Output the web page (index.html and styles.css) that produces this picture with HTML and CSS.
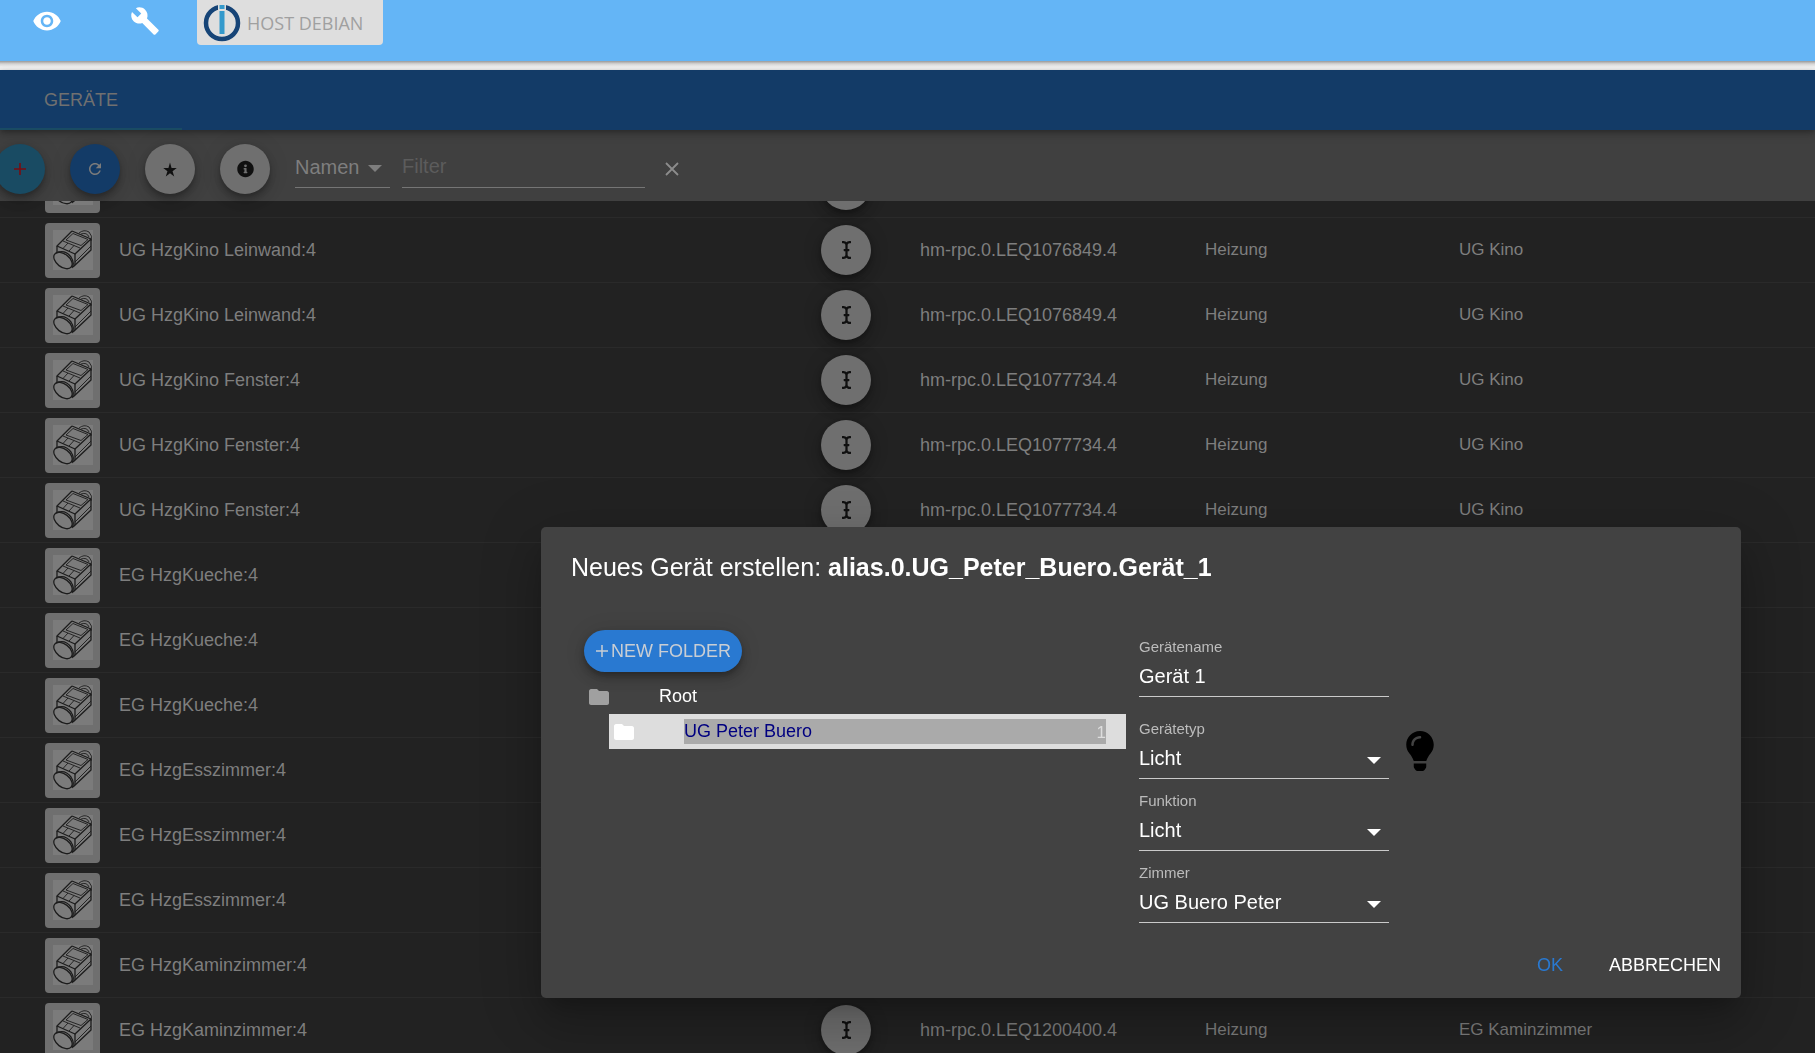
FILE: index.html
```html
<!DOCTYPE html>
<html lang="de">
<head>
<meta charset="utf-8">
<title>Geräte</title>
<link rel="stylesheet" href="styles.css">
</head>
<body>
<svg class="sprite" aria-hidden="true">
  <symbol id="thermostat" viewBox="0 0 40 40">
    <g fill="none" stroke="#1c1c1c" stroke-linejoin="round">
      <g stroke-width="1.300">
        <path d="M19 1 L38 9 V20 L20 37"/>
        <path d="M19 1 L4 16 L22 24 L38 9"/>
        <path d="M22 24 V35 M4 16 V23"/>
        <ellipse cx="10" cy="30.500" rx="10.500" ry="6.500" transform="rotate(38 10 30.500)"/>
        <path d="M3 23 Q12 19 18 27 Q22 33 19 38"/>
      </g>
      <g stroke-width="0.900">
        <path d="M20 3.500 L35 9.500 L28 15.500 L13 10 Z"/>
        <path d="M10 11 L27 18 M10 18.500 L15 13 M16 21 L21 15.500"/>
        <path d="M26 3 Q31 -1 36 2 Q40 6 38 11 M28 4 Q34 2 36 7"/>
        <path d="M22 32 L38 16"/>
      </g>
    </g>
  </symbol>
  <symbol id="cursor" viewBox="0 0 256 512">
    <path d="M256 52.048V12.065C256 5.496 250.726.148 244.158.066 211.621-.344 166.469.011 128 37.959 90.266.736 46.979-.114 11.913.114 5.318.157 0 5.519 0 12.114v39.645c0 6.687 5.458 12.078 12.145 11.998C38.111 63.447 96 67.243 96 112.182V224H60c-6.627 0-12 5.373-12 12v40c0 6.627 5.373 12 12 12h36v112c0 44.932-56.075 48.031-83.95 47.959C5.404 447.942 0 453.306 0 459.952v39.983c0 6.569 5.274 11.917 11.842 11.999 32.537.409 77.689.054 116.158-37.894 37.734 37.223 81.021 38.073 116.087 37.845 6.595-.043 11.913-5.405 11.913-12V460.24c0-6.687-5.458-12.078-12.145-11.998C217.889 448.553 160 444.939 160 400V288h36c6.627 0 12-5.373 12-12v-40c0-6.627-5.373-12-12-12h-36V112.182c0-44.932 56.075-48.213 83.95-48.142 6.646.018 12.05-5.346 12.05-11.992z"/>
  </symbol>
  <symbol id="caret" viewBox="0 0 14 7"><path d="M0 0h14l-7 7z"/></symbol>
  <symbol id="folder" viewBox="0 0 20 16"><path d="M8 0H2C1 0 0 1 0 2v12c0 1 1 2 2 2h16c1 0 2-1 2-2V4c0-1-1-2-2-2h-8z"/></symbol>
</svg>

<header class="appbar">
  <button class="appbar-icon" aria-label="Ansicht"><svg width="30" height="30" viewBox="0 0 24 24"><path d="M12 4.500C7 4.500 2.730 7.610 1 12c1.730 4.390 6 7.500 11 7.500s9.270-3.110 11-7.500c-1.730-4.390-6-7.500-11-7.500zM12 17c-2.760 0-5-2.240-5-5s2.240-5 5-5 5 2.240 5 5-2.240 5-5 5zm0-8c-1.660 0-3 1.340-3 3s1.340 3 3 3 3-1.340 3-3-1.340-3-3-3z"/></svg></button>
  <button class="appbar-icon" aria-label="Einstellungen"><svg width="30" height="30" viewBox="0 0 24 24"><path d="M22.700 19l-9.100-9.100c.9-2.300.4-5-1.500-6.900-2-2-5-2.400-7.400-1.300L9 6 6 9 1.600 4.700C.4 7.100.9 10.100 2.900 12.100c1.900 1.900 4.600 2.400 6.900 1.500l9.100 9.100c.4.4 1 .4 1.400 0l2.300-2.300c.5-.4.5-1.100.1-1.400z"/></svg></button>
  <button class="host">
    <svg width="38" height="38" viewBox="0 0 38 38"><circle cx="19" cy="19" r="16" fill="none" stroke="#164477" stroke-width="4.500"/><path fill="#dedede" d="M15 0h8v9h-8z"/><path fill="#3399cc" d="M16.500 1h5v4h-5zM16.500 7h5v23h-5z"/></svg>
    <span>HOST DEBIAN</span>
  </button>
</header>

<nav class="tabs"><a class="tab" href="#geraete">GERÄTE</a></nav>

<div class="toolbar">
  <button class="fab fab-add" aria-label="Hinzufügen"><svg width="12" height="12" viewBox="0 0 12 12"><path d="M6 0v12M0 6h12" stroke="#7a0c10" stroke-width="1.600"/></svg></button>
  <button class="fab fab-refresh" aria-label="Aktualisieren"><svg width="18" height="18" viewBox="0 0 24 24"><path fill="#7b7b7b" d="M17.650 6.350C16.200 4.900 14.210 4 12 4c-4.420 0-7.990 3.580-7.990 8s3.570 8 7.990 8c3.730 0 6.840-2.550 7.730-6h-2.080c-.82 2.330-3.040 4-5.650 4-3.310 0-6-2.690-6-6s2.690-6 6-6c1.660 0 3.140.69 4.220 1.780L13 11h7V4l-2.350 2.350z"/></svg></button>
  <button class="fab" aria-label="Favoriten"><svg width="18" height="18" viewBox="0 0 24 24"><path fill="#101010" d="M12 17.800l5.600 4.200-2.200-7 5.600-4.200h-6.900L12 3.200 9.900 10.800H3l5.600 4.200-2.200 7z"/></svg></button>
  <button class="fab" aria-label="Info"><svg width="17" height="18" viewBox="0 0 512 512"><path fill="#101010" d="M256 8C119 8 8 119 8 256s111 248 248 248 248-111 248-248S393 8 256 8zm0 110a42 42 0 1 1 0 84 42 42 0 0 1 0-84zm56 254a12 12 0 0 1-12 12h-88a12 12 0 0 1-12-12v-24a12 12 0 0 1 12-12h12v-64h-12a12 12 0 0 1-12-12v-24a12 12 0 0 1 12-12h64a12 12 0 0 1 12 12v100h12a12 12 0 0 1 12 12z"/></svg></button>
  <span class="select select-sort">
    <select aria-label="Sortierung"><option>Namen</option></select>
    <svg class="caret"><use href="#caret"/></svg>
  </span>
  <input class="filter" type="text" placeholder="Filter" aria-label="Filter">
  <button class="clear" aria-label="Filter löschen"><svg width="14" height="14" viewBox="0 0 14 14"><path d="M1 1l12 12M13 1L1 13" stroke="#8c8c8c" stroke-width="1.800"/></svg></button>
</div>

<main class="list">
  <table class="devices">
    <colgroup><col class="c-pic"><col><col class="c-edit"><col class="c-id"><col class="c-fn"><col class="c-room"></colgroup>
    <tbody>
      <tr><td><span class="pic"><svg><use href="#thermostat"/></svg></span></td><td></td><td><button class="fab" aria-label="Bearbeiten"><svg class="cur"><use href="#cursor"/></svg></button></td><td></td><td></td><td></td></tr>
      <tr><td><span class="pic"><svg><use href="#thermostat"/></svg></span></td><td>UG HzgKino Leinwand:4</td><td><button class="fab" aria-label="Bearbeiten"><svg class="cur"><use href="#cursor"/></svg></button></td><td>hm-rpc.0.LEQ1076849.4</td><td class="small">Heizung</td><td class="small">UG Kino</td></tr>
      <tr><td><span class="pic"><svg><use href="#thermostat"/></svg></span></td><td>UG HzgKino Leinwand:4</td><td><button class="fab" aria-label="Bearbeiten"><svg class="cur"><use href="#cursor"/></svg></button></td><td>hm-rpc.0.LEQ1076849.4</td><td class="small">Heizung</td><td class="small">UG Kino</td></tr>
      <tr><td><span class="pic"><svg><use href="#thermostat"/></svg></span></td><td>UG HzgKino Fenster:4</td><td><button class="fab" aria-label="Bearbeiten"><svg class="cur"><use href="#cursor"/></svg></button></td><td>hm-rpc.0.LEQ1077734.4</td><td class="small">Heizung</td><td class="small">UG Kino</td></tr>
      <tr><td><span class="pic"><svg><use href="#thermostat"/></svg></span></td><td>UG HzgKino Fenster:4</td><td><button class="fab" aria-label="Bearbeiten"><svg class="cur"><use href="#cursor"/></svg></button></td><td>hm-rpc.0.LEQ1077734.4</td><td class="small">Heizung</td><td class="small">UG Kino</td></tr>
      <tr><td><span class="pic"><svg><use href="#thermostat"/></svg></span></td><td>UG HzgKino Fenster:4</td><td><button class="fab" aria-label="Bearbeiten"><svg class="cur"><use href="#cursor"/></svg></button></td><td>hm-rpc.0.LEQ1077734.4</td><td class="small">Heizung</td><td class="small">UG Kino</td></tr>
      <tr><td><span class="pic"><svg><use href="#thermostat"/></svg></span></td><td>EG HzgKueche:4</td><td></td><td></td><td></td><td></td></tr>
      <tr><td><span class="pic"><svg><use href="#thermostat"/></svg></span></td><td>EG HzgKueche:4</td><td></td><td></td><td></td><td></td></tr>
      <tr><td><span class="pic"><svg><use href="#thermostat"/></svg></span></td><td>EG HzgKueche:4</td><td></td><td></td><td></td><td></td></tr>
      <tr><td><span class="pic"><svg><use href="#thermostat"/></svg></span></td><td>EG HzgEsszimmer:4</td><td></td><td></td><td></td><td></td></tr>
      <tr><td><span class="pic"><svg><use href="#thermostat"/></svg></span></td><td>EG HzgEsszimmer:4</td><td></td><td></td><td></td><td></td></tr>
      <tr><td><span class="pic"><svg><use href="#thermostat"/></svg></span></td><td>EG HzgEsszimmer:4</td><td></td><td></td><td></td><td></td></tr>
      <tr><td><span class="pic"><svg><use href="#thermostat"/></svg></span></td><td>EG HzgKaminzimmer:4</td><td></td><td></td><td></td><td></td></tr>
      <tr><td><span class="pic"><svg><use href="#thermostat"/></svg></span></td><td>EG HzgKaminzimmer:4</td><td><button class="fab" aria-label="Bearbeiten"><svg class="cur"><use href="#cursor"/></svg></button></td><td>hm-rpc.0.LEQ1200400.4</td><td class="small">Heizung</td><td class="small">EG Kaminzimmer</td></tr>
    </tbody>
  </table>
</main>

<div class="overlay">
  <section class="dialog" role="dialog" aria-labelledby="dialog-title">
    <h2 id="dialog-title">Neues Gerät erstellen: <b>alias.0.UG_Peter_Buero.Gerät_1</b></h2>
    <div class="content">
      <div class="folders">
        <button class="new-folder"><svg width="12" height="12" viewBox="0 0 12 12"><path d="M6 0v12M0 6h12" stroke="#c9ced4" stroke-width="1.500"/></svg>NEW FOLDER</button>
        <div class="folder"><svg class="folder-icon"><use href="#folder"/></svg><span class="folder-name">Root</span></div>
        <div class="folder selected"><svg class="folder-icon"><use href="#folder"/></svg><span class="folder-name">UG Peter Buero<span class="count">1</span></span></div>
      </div>
      <form class="fields">
        <div class="field field-name"><label for="name">Gerätename</label><input id="name" type="text" value="Gerät 1"></div>
        <div class="field-row">
          <div class="field"><label for="type">Gerätetyp</label><span class="select"><select id="type"><option>Licht</option></select><svg class="caret"><use href="#caret"/></svg></span></div>
          <svg class="bulb" width="28" height="40" viewBox="0 0 352 512"><path d="M96.060 454.350c.01 6.290 1.870 12.450 5.360 17.690l17.090 25.690a31.990 31.990 0 0 0 26.640 14.280h61.710a31.990 31.990 0 0 0 26.640-14.280l17.090-25.690a31.989 31.989 0 0 0 5.360-17.690l.04-38.350H96.010l.05 38.350zM0 176c0 44.370 16.450 84.850 43.560 115.780 16.520 18.850 42.360 58.230 52.210 91.450.04.26.07.52.11.78h160.240c.04-.26.07-.51.11-.78 9.850-33.220 35.690-72.600 52.210-91.450C335.550 260.850 352 220.370 352 176 352 78.610 272.910-.3 175.450 0 73.440.31 0 82.970 0 176zm176-80c-44.110 0-80 35.890-80 80 0 8.840-7.160 16-16 16s-16-7.160-16-16c0-61.760 50.240-112 112-112 8.840 0 16 7.160 16 16s-7.160 16-16 16z"/></svg>
        </div>
        <div class="field"><label for="function">Funktion</label><span class="select"><select id="function"><option>Licht</option></select><svg class="caret"><use href="#caret"/></svg></span></div>
        <div class="field"><label for="room">Zimmer</label><span class="select"><select id="room"><option>UG Buero Peter</option></select><svg class="caret"><use href="#caret"/></svg></span></div>
      </form>
    </div>
    <footer class="actions"><button class="ok">OK</button><button>ABBRECHEN</button></footer>
  </section>
</div>
</body>
</html>
```
FILE: styles.css
```css
* { box-sizing: border-box; }

body {
  margin: 0;
  height: 100vh;
  display: flex;
  flex-direction: column;
  overflow: hidden;
  background: #222;
  color: #7e7e7e;
  font-family: "Liberation Sans", Arial, sans-serif;
  font-size: 18px;
}

button, input, select {
  font: inherit;
  color: inherit;
  margin: 0;
  padding: 0;
  border: 0;
  border-radius: 0;
  background: none;
  appearance: none;
  outline: 0;
}

svg { display: block; flex: none; }
.sprite { position: absolute; width: 0; height: 0; }

/* App bar */
.appbar {
  flex: none;
  display: flex;
  align-items: flex-start;
  height: 70px;
  background: linear-gradient(#64b5f6 61px, #999 61px, #d6d6d6 64px, #f0f0f0 67px, #f0f0f0 70px);
}
.appbar-icon { width: 98px; padding: 6px 0 0 32px; fill: #fff; }
.appbar-icon svg { overflow: visible; }
.host {
  display: flex;
  align-items: center;
  height: 45px;
  width: 186px;
  margin-left: 1px;
  padding-left: 6px;
  gap: 6px;
  background: #dedede;
  border-radius: 0 0 4px 4px;
  color: #a0a0a0;
  font-family: "Open Sans", "Noto Sans", sans-serif;
}

/* Tabs */
.tabs {
  position: relative;
  z-index: 2;
  flex: none;
  height: 60px;
  background: #133b67;
  box-shadow: 0 2px 5px rgba(0, 0, 0, .25), 0 4px 10px rgba(0, 0, 0, .15);
}
.tab {
  display: flex;
  align-items: center;
  width: 182px;
  height: 60px;
  padding: 2px 0 0 44px;
  border-bottom: 2px solid #194b63;
  color: #707070;
  text-decoration: none;
}

/* Toolbar */
.toolbar {
  flex: none;
  display: flex;
  align-items: center;
  height: 71px;
  margin-left: -5px;
  background: #404040;
}
.fab {
  flex: none;
  display: flex;
  align-items: center;
  justify-content: center;
  width: 50px;
  height: 50px;
  border-radius: 50%;
  background: #6f6f6f;
  box-shadow: 0 4px 6px -1px rgba(0, 0, 0, .25), 0 7px 12px rgba(0, 0, 0, .14), 0 1px 22px rgba(0, 0, 0, .1);
}
.toolbar .fab { margin-right: 25px; margin-top: 7px; }
.toolbar .fab-add { background: #194b63; }
.toolbar .fab-refresh { background: #133b67; }

.select { display: grid; align-items: center; border-bottom: 1px solid #cacaca; }
.select select, .select .caret { grid-area: 1 / 1; }
.select .caret {
  width: 14px;
  height: 7px;
  margin-right: 8px;
  margin-top: 4px;
  justify-self: end;
  fill: currentColor;
  pointer-events: none;
}
.select-sort, .filter {
  height: 42px;
  margin-top: 3px;
  border-bottom: 1px solid #757575;
  font-size: 20px;
}
.select-sort { width: 95px; margin-right: 12px; }
.filter { width: 243px; }
.filter::placeholder { color: #5c5c5c; opacity: 1; }
.clear { margin-left: 20px; margin-top: 7px; }

/* Device list, scrolled into its second row */
.list { flex: 1; min-height: 0; overflow: hidden; }
.devices {
  width: 100%;
  margin-top: -48px;
  table-layout: fixed;
  border-collapse: separate;
  border-spacing: 0;
}
.c-pic { width: 119px; }
.c-edit { width: 99px; }
.c-id { width: 285px; }
.c-fn { width: 254px; }
.c-room { width: 356px; }
.devices td {
  height: 65px;
  padding: 0;
  border-bottom: 1px solid #2a2a2a;
  white-space: nowrap;
  vertical-align: middle;
}
.devices .small { font-size: 17px; }
.pic {
  display: flex;
  align-items: center;
  justify-content: center;
  width: 55px;
  height: 55px;
  margin-left: 45px;
  border-radius: 4px;
  background: #6f6f6f;
}
.pic svg { width: 40px; height: 40px; background: #7b7b7b; }
.cur { width: 9px; height: 18px; fill: #101010; }

/* Dialog */
.overlay {
  position: fixed;
  inset: 0;
  z-index: 5;
  display: flex;
  align-items: flex-end;
  justify-content: flex-end;
  padding: 0 74px 55px;
}
.dialog {
  width: 1200px;
  max-width: 100%;
  border-radius: 5px;
  background: #424242;
  color: #fff;
  box-shadow: 0 14px 19px -9px rgba(0, 0, 0, .2), 0 30px 48px 4px rgba(0, 0, 0, .14), 0 11px 58px 10px rgba(0, 0, 0, .12);
}
.dialog h2 {
  margin: 0;
  padding: 20px 30px;
  font-size: 25px;
  font-weight: 400;
  line-height: 40px;
}
.content { display: flex; gap: 13px; padding: 23px 30px 0 43px; }
.folders { flex: 1; max-width: 542px; }
.new-folder {
  display: flex;
  align-items: center;
  gap: 3px;
  height: 42px;
  padding: 0 11px 0 12px;
  border-radius: 21px;
  background: #2979d1;
  color: #c9ced4;
  box-shadow: 0 4px 6px -1px rgba(0, 0, 0, .25), 0 7px 12px rgba(0, 0, 0, .14), 0 1px 22px rgba(0, 0, 0, .1);
}
.folder {
  display: flex;
  align-items: center;
  gap: 50px;
  height: 35px;
  margin-top: 7px;
  padding: 0 20px 0 5px;
}
.folder-icon { width: 20px; height: 16px; fill: #a0a0a0; }
.folder-name { flex: 1; line-height: 25px; }
.selected { margin: 0 0 0 25px; background: #ddd; }
.selected .folder-icon { fill: #fff; }
.selected .folder-name {
  display: flex;
  justify-content: space-between;
  background: #aaa;
  color: #000080;
}
.count { padding-top: 3px; line-height: 22px; font-size: 17px; color: #ddd; }

.fields { padding-top: 8px; }
.field { display: flex; flex-direction: column; width: 250px; height: 72px; }
.field-name { height: 82px; }
.field label { font-size: 15px; line-height: 18px; color: #bcbcbc; }
.field input, .field select { font-size: 20px; height: 40px; }
.field .select { height: 41px; }
.field input { height: 41px; border-bottom: 1px solid #cacaca; }
.field-row { display: flex; gap: 17px; }
.bulb { margin-top: 11px; fill: #000; }

.actions {
  display: flex;
  justify-content: flex-end;
  gap: 46px;
  padding: 9px 20px 13px;
  line-height: 40px;
}
.ok { color: #2979d1; }
```
